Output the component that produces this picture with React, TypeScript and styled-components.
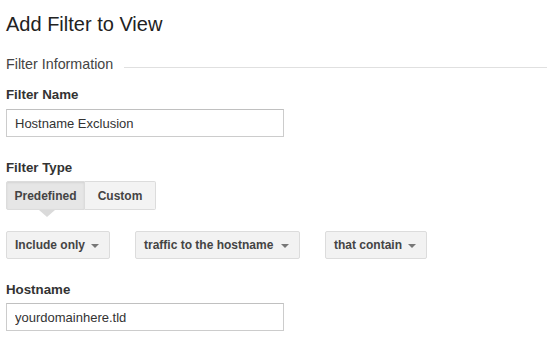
import styled, { createGlobalStyle } from 'styled-components';

const GlobalStyle = createGlobalStyle`
  html, body {
    margin: 0;
    padding: 0;
    background: #fff;
  }
  body {
    font-family: "Liberation Sans", Arial, sans-serif;
    color: #333;
  }
`;

const Page = styled.div`
  padding: 12px 0 0 6px;
  width: 541px;
`;

const Title = styled.h1`
  margin: 0;
  font-size: 20px;
  line-height: 24px;
  font-weight: normal;
  color: #222;
`;

const Legend = styled.div`
  display: flex;
  align-items: center;
  gap: 11px;
  margin-top: 19px;
  font-size: 14.3px;
  line-height: 18px;
  color: #444;
`;

const Rule = styled.div`
  flex: 1;
  height: 1px;
  margin-top: 7px;
  background: #e0e0e0;
`;

const Label = styled.div<{ $top: number }>`
  margin-top: ${(p) => p.$top}px;
  font-size: 13.3px;
  line-height: 16px;
  font-weight: bold;
  color: #333;
`;

const TextInput = styled.input<{ $top: number }>`
  display: block;
  box-sizing: border-box;
  width: 278px;
  height: 28px;
  margin-top: ${(p) => p.$top}px;
  padding: 0 8px;
  border: 1px solid #ccc;
  border-top-color: #c0c0c0;
  font-family: "Liberation Sans", Arial, sans-serif;
  font-size: 13px;
  color: #333;
  outline: none;
`;

const Segmented = styled.div`
  display: flex;
  margin-top: 5px;
  width: 150px;
`;

const Segment = styled.div<{ $active?: boolean; $width: number }>`
  position: relative;
  box-sizing: border-box;
  width: ${(p) => p.$width}px;
  height: 29px;
  display: flex;
  align-items: center;
  justify-content: center;
  border: 1px solid #dcdcdc;
  border-radius: ${(p) => (p.$active ? '2px 0 0 2px' : '0 2px 2px 0')};
  ${(p) => (p.$active ? '' : 'border-left: none;')}
  background: ${(p) => (p.$active ? '#e6e6e6' : '#f3f3f3')};
  box-shadow: ${(p) => (p.$active ? 'inset 0 1px 2px rgba(0,0,0,0.08)' : 'none')};
  font-size: 12px;
  font-weight: bold;
  color: #444;

  ${(p) =>
    p.$active &&
    `
    &::after {
      content: '';
      position: absolute;
      left: 32px;
      top: 28px;
      border-left: 8px solid transparent;
      border-right: 8px solid transparent;
      border-top: 7px solid #dadada;
    }
  `}
`;

const SelectRow = styled.div`
  display: flex;
  gap: 25px;
  margin-top: 21px;
`;

const Select = styled.div<{ $width: number }>`
  box-sizing: border-box;
  width: ${(p) => p.$width}px;
  height: 28px;
  display: flex;
  align-items: center;
  justify-content: space-between;
  padding: 0 10px 0 8px;
  border: 1px solid #dcdcdc;
  border-radius: 2px;
  background: #f2f2f2;
  font-size: 12px;
  font-weight: bold;
  color: #444;
`;

const Caret = styled.span`
  width: 0;
  height: 0;
  margin-top: 2px;
  border-left: 4px solid transparent;
  border-right: 4px solid transparent;
  border-top: 4px solid #777;
`;

export default function App() {
  return (
    <>
      <GlobalStyle />
      <Page>
        <Title>Add Filter to View</Title>
        <Legend>
          Filter Information
          <Rule />
        </Legend>

        <Label $top={14}>Filter Name</Label>
        <TextInput $top={6} defaultValue="Hostname Exclusion" />

        <Label $top={23}>Filter Type</Label>
        <Segmented>
          <Segment $active $width={79}>Predefined</Segment>
          <Segment $width={71}>Custom</Segment>
        </Segmented>

        <SelectRow>
          <Select $width={104}>
            Include only
            <Caret />
          </Select>
          <Select $width={165}>
            traffic to the hostname
            <Caret />
          </Select>
          <Select $width={102}>
            that contain
            <Caret />
          </Select>
        </SelectRow>

        <Label $top={23}>Hostname</Label>
        <TextInput $top={5} defaultValue="yourdomainhere.tld" />
      </Page>
    </>
  );
}
